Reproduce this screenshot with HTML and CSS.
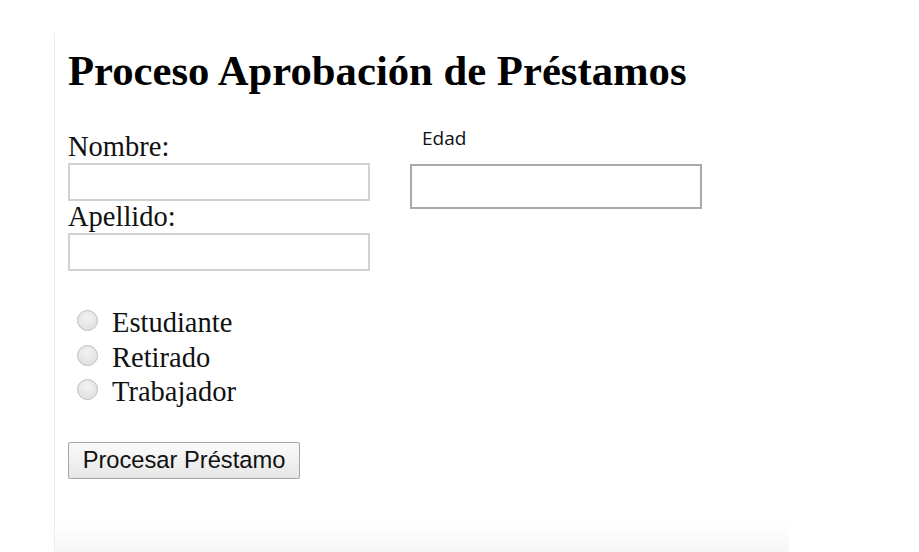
FILE: index.html
```html
<!DOCTYPE html>
<html lang="es">
<head>
<meta charset="utf-8">
<title>Proceso Aprobación de Préstamos</title>
<link rel="stylesheet" href="styles.css">
</head>
<body>
<div class="panel">
  <h1 class="title">Proceso Aprobación de Préstamos</h1>
  <div class="form-row">
    <div class="col-left">
      <label class="lbl">Nombre:</label>
      <input class="txt" type="text">
      <label class="lbl">Apellido:</label>
      <input class="txt" type="text">
    </div>
    <div class="col-right">
      <label class="edad-lbl">Edad</label>
      <input class="edad-txt" type="text">
    </div>
  </div>
  <div class="radios">
    <label class="radio-row"><span class="radio"></span>Estudiante</label>
    <label class="radio-row"><span class="radio"></span>Retirado</label>
    <label class="radio-row"><span class="radio"></span>Trabajador</label>
  </div>
  <button class="btn" type="button">Procesar Préstamo</button>
</div>
</body>
</html>
```

FILE: styles.css
```css
html, body {
  margin: 0;
  padding: 0;
  background: #ffffff;
  overflow: hidden;
}
body {
  width: 919px;
  height: 552px;
  font-family: "Liberation Serif", "Times New Roman", serif;
  color: #111;
}
.panel {
  margin-left: 54px;
  margin-top: 33px;
  width: 721px;
  height: 519px;
  padding-left: 13px;
  border-left: 1px solid #ededed;
  box-sizing: content-box;
  background: linear-gradient(to bottom, #ffffff 0, #ffffff 490px, #f6f6f6 519px);
  overflow: hidden;
}
.title {
  margin: 12px 0 29px 0;
  font-size: 42.7px;
  line-height: 52px;
  font-weight: bold;
  color: #000;
}
.form-row {
  display: flex;
  align-items: flex-start;
  gap: 40px;
}
.col-left {
  display: flex;
  flex-direction: column;
  width: 302px;
  padding-top: 5px;
}
.lbl {
  font-size: 28.5px;
  line-height: 32px;
  display: block;
}
.txt {
  display: block;
  box-sizing: border-box;
  width: 302px;
  height: 38px;
  margin: 0;
  border: 2px solid #d2d2d2;
  background: #fff;
}
.col-right {
  display: flex;
  flex-direction: column;
}
.edad-lbl {
  font-family: "Open Sans", "Liberation Sans", sans-serif;
  font-size: 19px;
  line-height: 24px;
  padding-left: 12px;
  color: #111;
}
.edad-txt {
  box-sizing: border-box;
  width: 292px;
  height: 45px;
  margin: 14px 0 0 0;
  border: 2px solid #a9a9a9;
  background: #fff;
}
.radios {
  margin-top: 35px;
  display: flex;
  flex-direction: column;
}
.radio-row {
  display: flex;
  align-items: center;
  font-size: 28.5px;
  line-height: 34.5px;
  height: 34.5px;
}
.radio {
  width: 19px;
  height: 19px;
  border-radius: 50%;
  border: 1px solid #bdbdbd;
  background: radial-gradient(circle at 50% 35%, #f2f2f2 0, #dcdcdc 100%);
  margin-left: 9px;
  margin-right: 14px;
  margin-top: -5px;
  flex: none;
}
.btn {
  display: block;
  margin-top: 32px;
  width: 232px;
  height: 37px;
  padding: 0;
  font-family: "Liberation Sans", Arial, sans-serif;
  font-size: 23.7px;
  color: #111;
  border: 1px solid #a6a6a6;
  border-radius: 2px;
  background: linear-gradient(to bottom, #fbfbfb, #e6e6e6);
}
```
